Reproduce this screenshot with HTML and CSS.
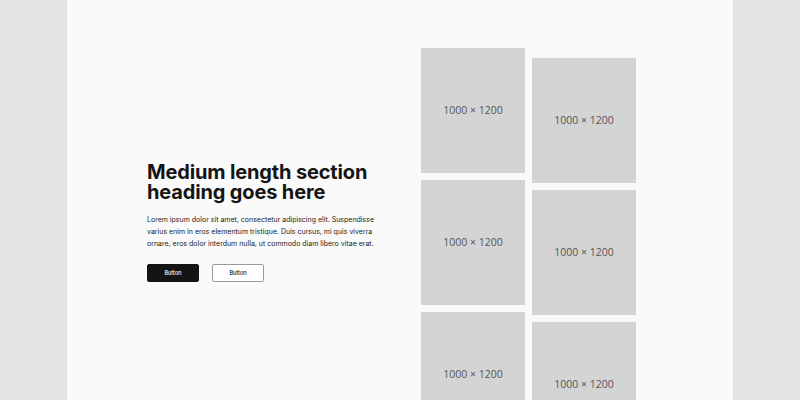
FILE: index.html
```html
<!DOCTYPE html>
<html>
<head>
<meta charset="utf-8">
<link rel="stylesheet" href="styles.css">
</head>
<body>
<div class="page">
  <section class="section">
    <div class="content">
      <h2 class="heading">Medium length section heading goes here</h2>
      <p class="text">Lorem ipsum dolor sit amet, consectetur adipiscing elit. Suspendisse varius enim in eros elementum tristique. Duis cursus, mi quis viverra ornare, eros dolor interdum nulla, ut commodo diam libero vitae erat.</p>
      <div class="actions">
        <button class="btn btn-primary">Button</button>
        <button class="btn btn-secondary">Button</button>
      </div>
    </div>
    <div class="gallery">
      <div class="col">
        <div class="ph">1000 × 1200</div>
        <div class="ph">1000 × 1200</div>
        <div class="ph">1000 × 1200</div>
      </div>
      <div class="col col-offset">
        <div class="ph">1000 × 1200</div>
        <div class="ph">1000 × 1200</div>
        <div class="ph">1000 × 1200</div>
      </div>
    </div>
  </section>
</div>
</body>
</html>
```

FILE: styles.css
```css
html, body {
  margin: 0;
  padding: 0;
  height: 100%;
  overflow: hidden;
}
body {
  background: #e4e4e4;
  font-family: Inter, "Liberation Sans", sans-serif;
}
.page {
  width: 666px;
  margin: 0 auto;
  height: 400px;
  background: #fafafa;
  overflow: hidden;
}
.section {
  display: flex;
  align-items: flex-start;
  padding: 48px 0 0 80px;
}
.content {
  width: 240px;
  padding-top: 114px;
  margin-right: 34px;
  color: #111;
}
.heading {
  margin: 0 0 12px 0;
  font-size: 20px;
  line-height: 20px;
  font-weight: 700;
  letter-spacing: -0.15px;
  color: #141414;
}
.text {
  margin: 0 0 14px 0;
  font-size: 7px;
  line-height: 12px;
  color: #222;
}
.actions {
  display: flex;
  gap: 13px;
}
.btn {
  width: 52px;
  height: 18px;
  box-sizing: border-box;
  border-radius: 2px;
  font-family: Inter, "Liberation Sans", sans-serif;
  font-size: 5.5px;
  padding: 0;
  font-weight: 500;
}
.btn-primary {
  background: #141414;
  color: #fff;
  border: 1px solid #141414;
}
.btn-secondary {
  background: #fff;
  color: #111;
  border: 1px solid #9a9a9a;
}
.gallery {
  display: flex;
  gap: 7px;
}
.col {
  display: flex;
  flex-direction: column;
  gap: 7px;
}
.col-offset {
  margin-top: 10px;
}
.ph {
  width: 104px;
  height: 124.8px;
  background: #d4d4d4;
  color: #555;
  font-family: "Open Sans", "Noto Sans", sans-serif;
  font-size: 10.5px;
  display: flex;
  align-items: center;
  justify-content: center;
}
```
